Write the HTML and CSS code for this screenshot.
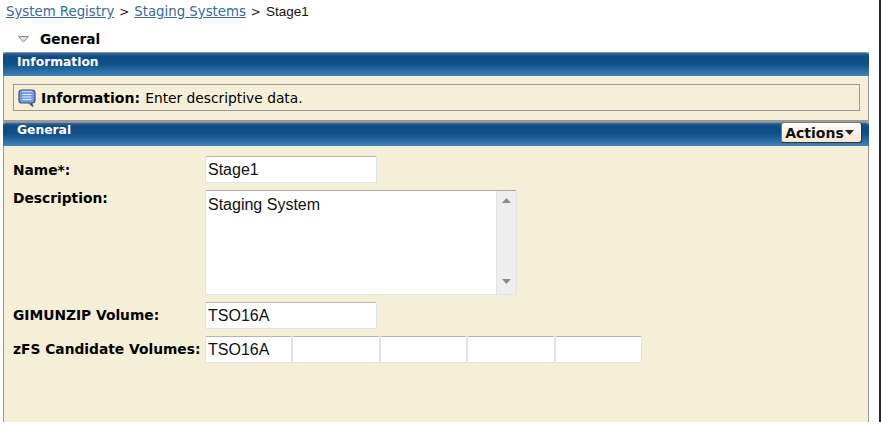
FILE: index.html
```html
<!DOCTYPE html>
<html lang="en">
<head>
<meta charset="utf-8">
<title>Stage1</title>
<link rel="stylesheet" href="styles.css">
</head>
<body>
<div class="page">
  <nav class="crumbs">
    <a href="#">System Registry</a><span class="sep">&gt;</span><a href="#">Staging Systems</a><span class="sep">&gt;</span><span class="cur">Stage1</span>
  </nav>
  <div class="section-title">
    <svg class="twisty" width="11" height="7" viewBox="0 0 11 7"><path d="M0.5 0.5H10.5L5.5 6Z" fill="#e4e4e4" stroke="#8a8a8a"/></svg>
    <span>General</span>
  </div>
  <section class="panel info-panel">
    <header class="bar"><h2>Information</h2></header>
    <div class="panel-body info-body">
      <div class="message">
        <svg class="msg-icon" width="18" height="19" viewBox="0 0 18 19">
          <path d="M4 1H14Q17 1 17 4V11Q17 14 14 14H13.500L15 17.500L11 14H4Q1 14 1 11V4Q1 1 4 1Z" fill="#6f9bea" stroke="#454f66" stroke-width="1.200"/>
          <path d="M4 2.500H14" stroke="#c4d6f7" stroke-width="1.200"/>
          <path d="M4.500 5.500H13.500M4.500 8H13.500M4.500 10.500H13.500" stroke="#e8f0ff" stroke-width="1.200"/>
        </svg>
        <strong>Information:</strong><span class="msg-text">Enter descriptive data.</span>
      </div>
    </div>
  </section>
  <section class="panel form-panel">
    <header class="bar bar-actions">
      <h2>General</h2>
      <button class="actions" type="button">Actions<svg width="9" height="5" viewBox="0 0 9 5"><path d="M0 0H9L4.500 5Z" fill="#222"/></svg></button>
    </header>
    <div class="panel-body form-body">
      <div class="row row-name">
        <label>Name*:</label>
        <input class="field w-short" type="text" value="Stage1">
      </div>
      <div class="row row-desc">
        <label>Description:</label>
        <div class="area">
          <div class="area-text">Staging System</div>
          <div class="scroll">
            <svg width="9" height="5" viewBox="0 0 9 5"><path d="M4.500 0L9 5H0Z" fill="#8c8c8c"/></svg>
            <svg width="9" height="5" viewBox="0 0 9 5"><path d="M0 0H9L4.500 5Z" fill="#8c8c8c"/></svg>
          </div>
        </div>
      </div>
      <div class="row row-gim">
        <label>GIMUNZIP Volume:</label>
        <input class="field w-short" type="text" value="TSO16A">
      </div>
      <div class="row row-zfs">
        <label>zFS Candidate Volumes:</label>
        <div class="vols">
          <input class="field vol" type="text" value="TSO16A">
          <input class="field vol" type="text">
          <input class="field vol" type="text">
          <input class="field vol" type="text">
          <input class="field vol" type="text">
        </div>
      </div>
    </div>
  </section>
</div>
</body>
</html>
```
FILE: styles.css
```css
html, body {
  margin: 0;
  padding: 0;
  background: #fff;
}
body {
  width: 881px;
  height: 430px;
  overflow: hidden;
  font-family: "DejaVu Sans", Verdana, sans-serif;
  color: #000;
}
.page {
  width: 881px;
  height: 422px;
  box-sizing: border-box;
  border-right: 2px solid #1c2b3a;
  padding: 0 10px 0 3px;
}
.crumbs {
  height: 26px;
  box-sizing: border-box;
  padding: 3px 0 0 3px;
  font-size: 13.300px;
  line-height: 18px;
  white-space: nowrap;
}
.crumbs a {
  color: #3a6a9c;
  text-decoration: underline;
}
.crumbs .sep {
  margin: 0 5px;
  font-size: 12px;
  color: #222;
}
.crumbs .cur {
  font-family: "Liberation Sans", Arial, sans-serif;
  font-size: 13.500px;
  color: #111;
}
.section-title {
  height: 26px;
  display: flex;
  align-items: center;
  padding-left: 15px;
  font-size: 13.700px;
  font-weight: 700;
}
.section-title .twisty {
  margin-right: 11px;
}
.panel {
  width: 866px;
  box-sizing: border-box;
  border-left: 1px solid #999;
  border-right: 1px solid #999;
  background: #f5efd8;
}
.bar {
  height: 24px;
  box-sizing: border-box;
  padding-left: 14px;
  border-top: 1px solid #7f93a8;
  border-radius: 3px 3px 0 0;
  background: linear-gradient(#3d6a96 0, #0f4c85 3px, #114f89 11px, #3b80b6 22px, #3f86bc 24px);
  margin: 0 -1px;
  display: flex;
  justify-content: space-between;
}
.bar h2 {
  margin: 0;
  font-size: 12.300px;
  line-height: 19px;
  font-weight: 700;
  color: #fff;
}
.panel-body {
  box-sizing: border-box;
}
.info-panel {
  height: 70px;
  border-bottom: 2px solid #999;
}
.info-body {
  padding: 8px 8px 0 9px;
}
.message {
  height: 27px;
  box-sizing: border-box;
  border: 1px solid #999;
  display: flex;
  align-items: center;
  padding-left: 4px;
  font-size: 14.100px;
  white-space: nowrap;
}
.msg-icon {
  margin: 1px 5px 0 0;
}
.msg-text {
  margin-left: 5px;
  font-size: 13.800px;
}
.form-panel {
  height: 300px;
}
.bar-actions {
  padding-right: 7px;
}
.bar-actions h2 {
  line-height: 14px;
}
.actions {
  margin-top: -1px;
  height: 21px;
  width: 81px;
  box-sizing: border-box;
  padding: 0 4px 0 0;
  border: 1px solid #7a7a7a;
  border-right-color: #333;
  border-bottom-color: #333;
  border-radius: 3px;
  background: linear-gradient(#fffdf8, #f7e6d3);
  font-family: "DejaVu Sans", Verdana, sans-serif;
  font-size: 14px;
  font-weight: 700;
  color: #111;
  display: flex;
  align-items: center;
  justify-content: center;
  gap: 1px;
}
.form-body {
  padding: 10px 0 0 9px;
}
.row {
  display: grid;
  grid-template-columns: 192px auto;
  justify-items: start;
}
.row label {
  font-size: 13.800px;
  font-weight: 700;
  line-height: 16px;
  white-space: nowrap;
}
.row-name {
  height: 34px;
}
.row-name label {
  margin-top: 6px;
}
.row-desc {
  height: 112px;
}
.row-desc label {
  margin-top: 0;
}
.row-gim {
  height: 34px;
}
.row-gim label {
  margin-top: 5px;
}
.row-zfs label {
  margin-top: 5px;
}
.field, .area {
  box-sizing: border-box;
  border: 1px solid #dfe2e8;
  border-top-color: #b4b4b4;
  border-radius: 2px;
  background: #fff;
}
.field {
  height: 27px;
  padding: 0 2px;
  font-family: "Liberation Sans", Arial, sans-serif;
  font-size: 16px;
  color: #111;
  outline: none;
}
.w-short {
  width: 172px;
}
.area {
  width: 312px;
  height: 105px;
  display: flex;
  justify-content: space-between;
  border-top-color: #aaa;
}
.area-text {
  padding: 4px 2px;
  font-family: "Liberation Sans", Arial, sans-serif;
  font-size: 16px;
  line-height: 19px;
  color: #111;
}
.scroll {
  width: 20px;
  background: #eeeeee;
  border-left: 1px solid #e2e2e2;
  display: flex;
  flex-direction: column;
  justify-content: space-between;
  align-items: center;
  padding: 7px 0 10px;
  box-sizing: border-box;
}
.vols {
  display: flex;
}
.vol {
  width: 87.400px;
  flex: none;
}
```
